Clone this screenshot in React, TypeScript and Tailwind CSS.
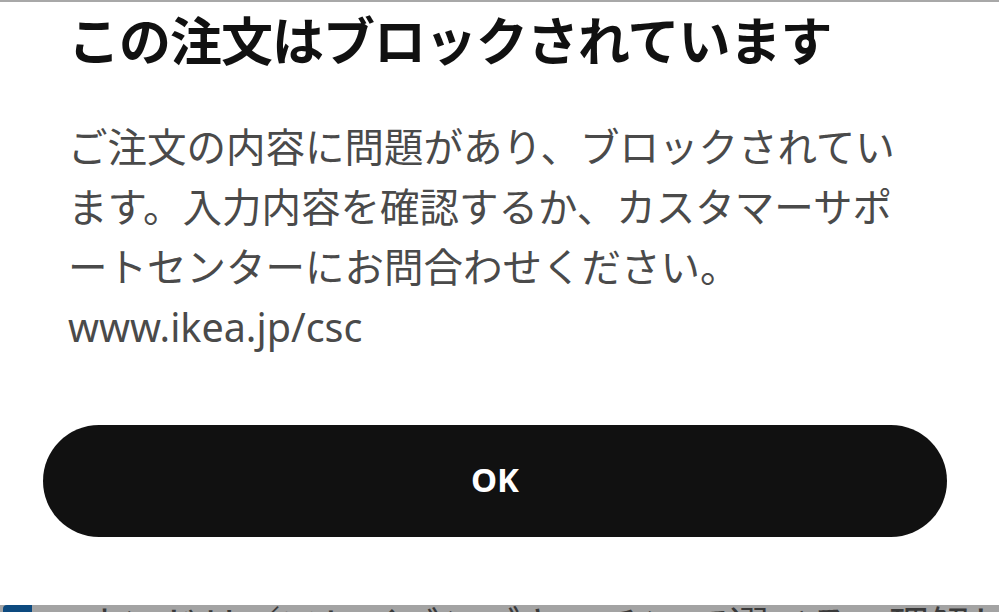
export default function App() {
  return (
    <div className="w-[999px] h-[612px] bg-white flex flex-col overflow-hidden" style={{ fontFamily: '"Noto Sans", "Noto Sans CJK JP", sans-serif' }}>
      <div className="h-[2px] bg-[#a8a8a8] shrink-0" />
      <h1
        className="mt-[7px] pl-[68px] text-[52px] leading-[60px] font-bold text-[#111111] tracking-[-1px] whitespace-nowrap"
        style={{ fontFamily: '"Noto Sans CJK JP", sans-serif' }}
      >
        この注文はブロックされています
      </h1>
      <p className="mt-[48px] pl-[68px] text-[39.5px] leading-[60px] text-[#4a4a4a] whitespace-nowrap">
        ご注文の内容に問題があり、ブロックされてい
        <br />
        ます。入力内容を確認するか、カスタマーサポ
        <br />
        ートセンターにお問合わせください。
        <br />
        www.ikea.jp/csc
      </p>
      <div className="mt-[68px] ml-[43px] w-[904px] h-[112px] rounded-full bg-[#111111] flex items-center justify-center shrink-0">
        <span className="text-white font-bold text-[33px] leading-none -mt-[3px]">OK</span>
      </div>
      <div className="flex-1" />
      <div className="h-[7px] bg-[#a3a3a3] flex items-start overflow-hidden shrink-0">
        <div className="ml-[3px] w-[29px] h-[7px] bg-[#0d4a7f] rounded-tl-[4px] shrink-0" />
        <span
          className="ml-[48px] text-[40px] leading-[40px] text-[#3a3a3a] whitespace-nowrap -mt-[2px]"
          style={{ fontFamily: '"Noto Sans CJK JP", sans-serif' }}
        >
          オンドリ／フレイバンズキッチン で選べる、理解した住まい
        </span>
      </div>
    </div>
  );
}
